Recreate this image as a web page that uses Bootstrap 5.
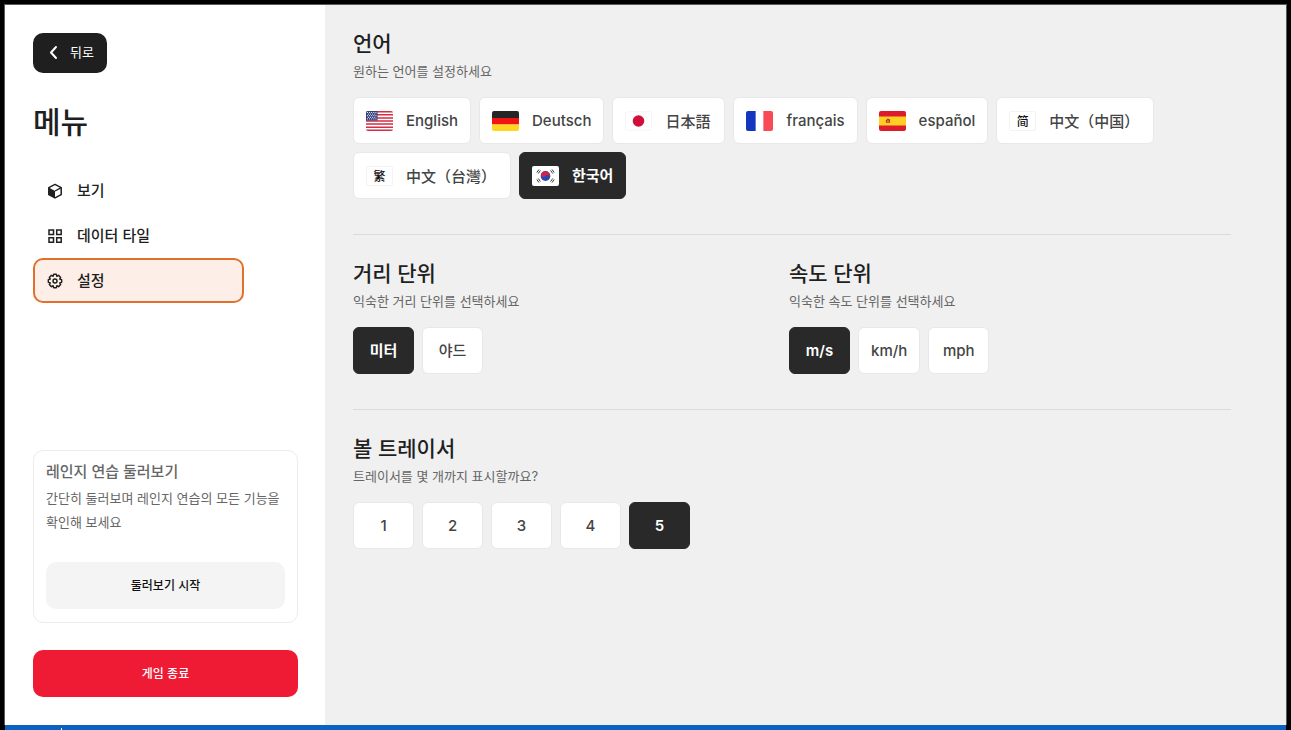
<!DOCTYPE html>
<html lang="ko">
<head>
<meta charset="utf-8">
<meta name="viewport" content="width=device-width, initial-scale=1">
<title>설정</title>
<link href="https://cdn.jsdelivr.net/npm/bootstrap@5.3.0/dist/css/bootstrap.min.css" rel="stylesheet">
<style>
  body { font-family: Inter, "Noto Sans CJK KR", sans-serif; font-size: 13px; color: #1f1f1f; background: #000; }
  h1, h2, h3, p { margin: 0; }
  .frame { min-height: 100vh; padding: 4px 4px 0; }
  .window { background: #f0f0f0; border: 1px solid #5a5a5a; border-bottom: 0; }
  .side { width: 320px; padding: 28px 27px 28px 28px; background: #fff; }
  .btn { --bs-btn-font-size: 12px; --bs-btn-font-weight: 500; --bs-btn-border-radius: 10px; line-height: 20px; }
  .btn-back { --bs-btn-font-size: 13px; --bs-btn-font-weight: 400; --bs-btn-color: #fff; --bs-btn-bg: #1f1f1f; --bs-btn-hover-color: #fff; --bs-btn-hover-bg: #333; height: 40px; padding: 0 12px 2px; }
  .menu-title { font-size: 30px; font-weight: 500; line-height: 44px; margin-top: 27px; }
  .side-nav { width: 211px; margin-top: 24px; }
  .side-nav .nav-link { height: 45px; padding: 0 12px; gap: 14px; border: 2px solid transparent; border-radius: 10px; color: #1f1f1f; font-size: 15px; font-weight: 500; line-height: 24px; }
  .side-nav .nav-link.active { background: #fdeee7; border-color: #e0702c; }
  .tour { padding: 8px 12px 13px; border: 1px solid #ececec; border-radius: 10px; color: #666; line-height: 24px; margin-bottom: 27px; }
  .tour h2 { font-size: 15px; font-weight: 500; line-height: 26px; margin-bottom: 1px; }
  .tour p { font-size: 13px; margin-bottom: 28px; }
  .btn-tall { height: 47px; }
  .btn-tour { --bs-btn-color: #111; --bs-btn-bg: #f4f4f4; --bs-btn-hover-bg: #e9e9e9; }
  .btn-quit { --bs-btn-color: #fff; --bs-btn-bg: #ef1a34; --bs-btn-hover-color: #fff; --bs-btn-hover-bg: #d3152c; }
  .settings { padding: 23px 55px 28px 28px; }
  .settings h2 { font-size: 21px; font-weight: 500; line-height: 32px; }
  .hint { font-size: 13px; line-height: 22px; color: #666; margin-bottom: 15px; }
  .rule { margin: 35px 0 23px; border-top: 1px solid #dcdcdc; opacity: 1; }
  .units { padding-right: 6px; }
  .choices { gap: 8px; }
  .choices .btn { --bs-btn-font-size: 15px; --bs-btn-color: #444; --bs-btn-bg: #fff; --bs-btn-border-color: #e8e8e8; --bs-btn-border-radius: 6px; --bs-btn-hover-bg: #fafafa; --bs-btn-hover-border-color: #ddd; --bs-btn-active-color: #fff; --bs-btn-active-bg: #292929; --bs-btn-active-border-color: #292929; min-width: 61px; height: 47px; padding: 0 12px; }
  .choices .btn-check:checked + .btn { font-weight: 600; }
  .choices .lang { gap: 13px; }
  .choices .ja { font-family: "Noto Sans CJK JP", sans-serif; padding-right: 14px; }
  .choices .sc { font-family: "Noto Sans CJK SC", sans-serif; padding-right: 14px; }
  .choices .tc { font-family: "Noto Sans CJK TC", sans-serif; padding-right: 14px; }
  .flag { width: 27px; height: 20px; border-radius: 2px; flex: none; }
  .flag-text { border: 1px solid #f3f3f3; color: #111; font-size: 12px; line-height: 18px; }
  .taskbar { height: 5px; margin: 0 1px; padding: 3px 0 0 56px; background: #0b62c1; }
  .taskbar span { width: 1px; height: 2px; background: #fff; }
</style>
</head>
<body>
<div class="frame d-flex flex-column">
  <div class="window d-flex flex-grow-1">
    <aside class="side d-flex flex-column flex-shrink-0">
      <button type="button" class="btn btn-back d-inline-flex align-items-center align-self-start gap-2">
        <svg width="16" height="16" viewBox="0 0 16 16" fill="none" stroke="#fff" stroke-width="2" stroke-linecap="round" stroke-linejoin="round" aria-hidden="true"><path d="M10 3 5 8.500l5 5.500"/></svg>
        뒤로
      </button>
      <h1 class="menu-title">메뉴</h1>
      <nav class="side-nav nav flex-column" aria-label="메뉴">
        <a class="nav-link d-flex align-items-center" href="#view">
          <svg width="16" height="16" viewBox="0 0 16 16" aria-hidden="true"><path d="M8 1.400 14.200 4.600v7L8 14.900 1.800 11.600v-7z" fill="none" stroke="#1f1f1f" stroke-width="1.500" stroke-linejoin="round"/><path d="M1.800 4.600 8 8v6.900l-6.200-3.300z" fill="#1f1f1f"/><path d="m8 8 6.200-3.400" stroke="#1f1f1f" stroke-width="1.300"/></svg>
          보기
        </a>
        <a class="nav-link d-flex align-items-center" href="#tiles">
          <svg width="16" height="16" viewBox="0 0 16 16" fill="none" stroke="#1f1f1f" stroke-width="1.500" aria-hidden="true"><path d="M2 2h4.500v4.500H2zM9.700 2h4.500v4.500H9.700zM2 9.700h4.500v4.500H2zM9.700 9.700h4.500v4.500H9.700z"/></svg>
          데이터 타일
        </a>
        <a class="nav-link active d-flex align-items-center" href="#settings" aria-current="page">
          <svg width="16" height="16" viewBox="0 0 24 24" fill="none" stroke="#1f1f1f" stroke-width="2.200" stroke-linejoin="round" aria-hidden="true"><circle cx="12" cy="12" r="3"/><path d="M10 2h4l.8 2.900 2.600-1.400 3.100 3.100-1.400 2.600L22 10v4l-2.900.8 1.400 2.600-3.100 3.100-2.600-1.400L14 22h-4l-.8-2.900-2.600 1.400-3.100-3.100 1.400-2.600L2 14v-4l2.900-.8-1.400-2.600 3.100-3.100 2.600 1.400z"/></svg>
          설정
        </a>
      </nav>
      <section class="tour mt-auto">
        <h2>레인지 연습 둘러보기</h2>
        <p>간단히 둘러보며 레인지 연습의 모든 기능을 확인해 보세요</p>
        <button type="button" class="btn btn-tour btn-tall w-100">둘러보기 시작</button>
      </section>
      <button type="button" class="btn btn-quit btn-tall w-100">게임 종료</button>
    </aside>

    <main class="settings flex-grow-1">
      <section>
        <h2>언어</h2>
        <p class="hint">원하는 언어를 설정하세요</p>
        <div class="choices d-flex flex-wrap" role="radiogroup" aria-label="언어">
          <input class="btn-check" type="radio" name="lang" id="lang-en">
          <label class="btn lang d-flex align-items-center" for="lang-en">
            <svg class="flag" viewBox="0 0 28 20" preserveAspectRatio="none" aria-hidden="true"><path fill="#fff" d="M0 0h28v20H0z"/><path stroke="#d02f44" stroke-width="1.540" d="M0 .770h28M0 3.850h28M0 6.920h28M0 10h28M0 13.080h28M0 16.150h28M0 19.230h28"/><path fill="#35407f" d="M0 0h12v9.500H0z"/><path stroke="#fff" stroke-dasharray="1 1.200" d="M1 1.500h10M2 3.100h9M1 4.700h10M2 6.300h9M1 7.900h10"/></svg>
            English
          </label>
          <input class="btn-check" type="radio" name="lang" id="lang-de">
          <label class="btn lang d-flex align-items-center" for="lang-de">
            <svg class="flag" viewBox="0 0 28 20" preserveAspectRatio="none" aria-hidden="true"><path fill="#262626" d="M0 0h28v7H0z"/><path fill="#f01515" d="M0 7h28v6.500H0z"/><path fill="#ffd520" d="M0 13.500h28V20H0z"/></svg>
            Deutsch
          </label>
          <input class="btn-check" type="radio" name="lang" id="lang-ja">
          <label class="btn ja lang d-flex align-items-center" for="lang-ja" lang="ja">
            <svg class="flag" viewBox="0 0 28 20" aria-hidden="true"><rect x=".5" y=".5" width="27" height="19" rx="1.500" fill="#fff" stroke="#f5f5f5"/><circle cx="14" cy="10" r="6" fill="#d0103a"/></svg>
            日本語
          </label>
          <input class="btn-check" type="radio" name="lang" id="lang-fr">
          <label class="btn lang d-flex align-items-center" for="lang-fr">
            <svg class="flag" viewBox="0 0 28 20" preserveAspectRatio="none" aria-hidden="true"><path fill="#fff" d="M0 0h28v20H0z"/><path fill="#1537c0" d="M0 0h10v20H0z"/><path fill="#f84a56" d="M18 0h10v20H18z"/></svg>
            français
          </label>
          <input class="btn-check" type="radio" name="lang" id="lang-es">
          <label class="btn lang d-flex align-items-center" for="lang-es">
            <svg class="flag" viewBox="0 0 28 20" preserveAspectRatio="none" aria-hidden="true"><path fill="#dc1c2c" d="M0 0h28v20H0z"/><path fill="#ffd023" d="M0 5.500h28v9H0z"/><path fill="#b83a1c" d="M7 9.500 9 7.500l2.500 1v3.200H7.200z"/><path fill="#e9a33c" d="M8.500 9.500h1.500v1.500H8.500z"/></svg>
            español
          </label>
          <input class="btn-check" type="radio" name="lang" id="lang-zh-cn">
          <label class="btn sc lang d-flex align-items-center" for="lang-zh-cn" lang="zh-CN">
            <span class="flag flag-text">简</span>
            中文（中国）
          </label>
          <input class="btn-check" type="radio" name="lang" id="lang-zh-tw">
          <label class="btn tc lang d-flex align-items-center" for="lang-zh-tw" lang="zh-TW">
            <span class="flag flag-text">繁</span>
            中文（台灣）
          </label>
          <input class="btn-check" type="radio" name="lang" id="lang-ko" checked>
          <label class="btn lang d-flex align-items-center" for="lang-ko">
            <svg class="flag" viewBox="0 0 28 20" preserveAspectRatio="none" aria-hidden="true"><path fill="#fff" d="M0 0h28v20H0z"/><circle cx="14" cy="10" r="5" fill="#2248b4"/><path fill="#d8213f" d="M9.800 7.300a5 5 0 0 1 8.400 5.400A2.500 2.500 0 0 0 14 10a2.500 2.500 0 0 1-4.200-2.700z"/><path stroke="#333" d="m5 6.500 2.200-3M6.500 7.500l2.200-3M19.300 15.500l2.200-3M20.800 16.500l2.200-3M5 13.500l2.200 3M6.500 12.500l2.200 3M19.300 4.500l2.200 3M20.800 3.500l2.200 3"/></svg>
            한국어
          </label>
        </div>
      </section>
      <hr class="rule">
      <div class="units row g-0">
        <section class="col-6">
          <h2>거리 단위</h2>
          <p class="hint">익숙한 거리 단위를 선택하세요</p>
          <div class="choices d-flex flex-wrap" role="radiogroup" aria-label="거리 단위">
            <input class="btn-check" type="radio" name="distance" id="dist-m" checked>
            <label class="btn d-flex align-items-center justify-content-center" for="dist-m">미터</label>
            <input class="btn-check" type="radio" name="distance" id="dist-yd">
            <label class="btn d-flex align-items-center justify-content-center" for="dist-yd">야드</label>
          </div>
        </section>
        <section class="col-6">
          <h2>속도 단위</h2>
          <p class="hint">익숙한 속도 단위를 선택하세요</p>
          <div class="choices d-flex flex-wrap" role="radiogroup" aria-label="속도 단위">
            <input class="btn-check" type="radio" name="speed" id="speed-ms" checked>
            <label class="btn d-flex align-items-center justify-content-center" for="speed-ms">m/s</label>
            <input class="btn-check" type="radio" name="speed" id="speed-kmh">
            <label class="btn d-flex align-items-center justify-content-center" for="speed-kmh">km/h</label>
            <input class="btn-check" type="radio" name="speed" id="speed-mph">
            <label class="btn d-flex align-items-center justify-content-center" for="speed-mph">mph</label>
          </div>
        </section>
      </div>
      <hr class="rule">
      <section>
        <h2>볼 트레이서</h2>
        <p class="hint">트레이서를 몇 개까지 표시할까요?</p>
        <div class="choices d-flex flex-wrap" role="radiogroup" aria-label="볼 트레이서">
          <input class="btn-check" type="radio" name="tracer" id="tracer-1">
          <label class="btn d-flex align-items-center justify-content-center" for="tracer-1">1</label>
          <input class="btn-check" type="radio" name="tracer" id="tracer-2">
          <label class="btn d-flex align-items-center justify-content-center" for="tracer-2">2</label>
          <input class="btn-check" type="radio" name="tracer" id="tracer-3">
          <label class="btn d-flex align-items-center justify-content-center" for="tracer-3">3</label>
          <input class="btn-check" type="radio" name="tracer" id="tracer-4">
          <label class="btn d-flex align-items-center justify-content-center" for="tracer-4">4</label>
          <input class="btn-check" type="radio" name="tracer" id="tracer-5" checked>
          <label class="btn d-flex align-items-center justify-content-center" for="tracer-5">5</label>
        </div>
      </section>
    </main>
  </div>
  <footer class="taskbar d-flex"><span></span></footer>
</div>
<script src="https://cdn.jsdelivr.net/npm/bootstrap@5.3.0/dist/js/bootstrap.bundle.min.js"></script>
</body>
</html>
